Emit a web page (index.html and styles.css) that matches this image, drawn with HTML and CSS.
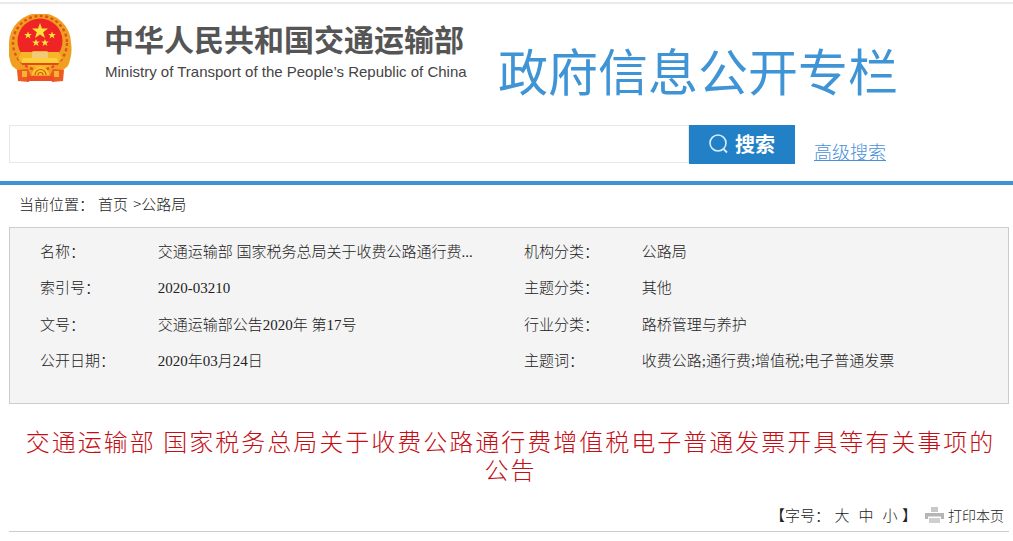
FILE: index.html
```html
<!DOCTYPE html>
<html lang="zh-CN">
<head>
<meta charset="utf-8">
<title>政府信息公开专栏</title>
<link rel="stylesheet" href="styles.css">
</head>
<body>
<div class="top-line"></div>
<header class="masthead">
  <svg class="emblem" width="63" height="69" viewBox="0 0 63 69" aria-hidden="true">
    <path d="M3 52 Q-2 40 0 29 A31 30 0 0 1 62 29 Q64 40 59 52 L47 62 H16Z" fill="#f0a020"/>
    <circle cx="31" cy="29" r="27" fill="none" stroke="#e2511c" stroke-width="2.400" stroke-dasharray="3 2.500"/>
    <circle cx="31" cy="27" r="22.500" fill="#ee2524"/>
    <path d="M12 38h38l3 7q-22 18-44 0z" fill="#f6b62a"/>
    <path d="M23 38h16v6H23z" fill="#f3c878"/>
    <path d="M24 38h14l1-1H23z" fill="#f5b52a"/>
    <path d="M14 44h34l2 5H12z" fill="#fbd038"/>
    <path d="M13 49h36v2H13z" fill="#e8471d"/>
    <path d="M23 61a8.500 8.500 0 0 1 17 0z" fill="#f9c62c"/>
    <path d="M26 61a5.500 5.500 0 0 1 11 0M29 61a2.500 2.500 0 0 1 5 0" fill="none" stroke="#d9531c" stroke-width="1.200"/>
    <path d="M8 56l11-1 3 6-2 7-11-1zM55 56l-11-1-3 6 2 7 11-1z" fill="#ee5a26"/>
    <path d="M18 62h27v5H18z" fill="#ef4c24"/>
    <path d="M13 57h5v6h-5zM45 57h5v6h-5z" fill="#f6b62a"/>
    <polygon fill="#fde23a" points="31,9 33,14.600 39,14.600 34.200,18.200 36,24 31,20.500 26,24 27.800,18.200 23,14.600 29,14.600"/>
    <polygon fill="#fde23a" points="19,17.500 20,20 22.800,20 20.600,21.700 21.400,24.500 19,22.800 16.600,24.500 17.400,21.700 15.200,20 18,20"/>
    <polygon fill="#fde23a" points="43,17.500 44,20 46.800,20 44.600,21.700 45.400,24.500 43,22.800 40.600,24.500 41.400,21.700 39.200,20 42,20"/>
    <polygon fill="#fde23a" points="27,25 28,27.500 30.800,27.500 28.600,29.200 29.400,32 27,30.300 24.600,32 25.400,29.200 23.200,27.500 26,27.500"/>
    <polygon fill="#fde23a" points="36,25 37,27.500 39.800,27.500 37.600,29.200 38.400,32 36,30.300 33.600,32 34.400,29.200 32.200,27.500 35,27.500"/>
  </svg>
  <div class="ministry">
    <div class="ministry-cn">中华人民共和国交通运输部</div>
    <div class="ministry-en">Ministry of Transport of the People’s Republic of China</div>
  </div>
  <div class="column-title">政府信息公开专栏</div>
</header>

<section class="search-row">
  <div class="search-input"></div>
  <div class="search-button">
    <svg width="22" height="22" viewBox="0 0 22 22" aria-hidden="true">
      <circle cx="10" cy="10" r="8" fill="none" stroke="#d8ecf8" stroke-width="1.600"/>
      <path d="M15.500 16l3.500 3.500" stroke="#d8ecf8" stroke-width="1.800" fill="none"/>
    </svg>
    <span>搜索</span>
  </div>
  <a class="advanced" href="#">高级搜索</a>
</section>

<div class="blue-bar"></div>

<nav class="crumbs"><span class="crumb-label">当前位置：</span><span>首页 &gt;公路局</span></nav>

<section class="meta">
  <div class="meta-row">
    <div class="meta-key">名称：</div><div class="meta-val">交通运输部 国家税务总局关于收费公路通行费...</div>
    <div class="meta-key">机构分类：</div><div class="meta-val">公路局</div>
  </div>
  <div class="meta-row">
    <div class="meta-key">索引号：</div><div class="meta-val">2020-03210</div>
    <div class="meta-key">主题分类：</div><div class="meta-val">其他</div>
  </div>
  <div class="meta-row">
    <div class="meta-key">文号：</div><div class="meta-val">交通运输部公告2020年 第17号</div>
    <div class="meta-key">行业分类：</div><div class="meta-val">路桥管理与养护</div>
  </div>
  <div class="meta-row">
    <div class="meta-key">公开日期：</div><div class="meta-val">2020年03月24日</div>
    <div class="meta-key">主题词：</div><div class="meta-val">收费公路;通行费;增值税;电子普通发票</div>
  </div>
</section>

<h1 class="article-title">交通运输部 国家税务总局关于收费公路通行费增值税电子普通发票开具等有关事项的公告</h1>

<div class="tools">
  <span class="font-size">【字号：<span class="size-opt">大</span><span class="size-opt">中</span><span class="size-opt">小</span>】</span>
  <svg class="printer" width="19" height="16" viewBox="0 0 19 16" aria-hidden="true">
    <path d="M6 0h7v5H6z" fill="#c8c8c8"/>
    <path d="M0 6h19v6h-3V9.500H3V12H0z" fill="#b5b5b5"/>
    <path d="M4 11h11v5H4z" fill="#cfcfcf"/>
  </svg>
  <span class="print-label">打印本页</span>
</div>
</body>
</html>
```
FILE: styles.css
```css
* { box-sizing: border-box; }
html, body { margin: 0; padding: 0; background: #fff; }
body {
  width: 1013px;
  height: 541px;
  overflow: hidden;
  font-family: "Liberation Serif", "Noto Sans CJK SC", serif;
  font-size: 15px;
  color: #333;
}
.top-line { height: 4px; border-top: 1px solid #fff; border-bottom: 2px solid #eaeaea; }
.masthead { display: flex; height: 96px; padding: 10px 0 0 9px; }
.emblem { flex: none; }
.ministry { margin-left: 33px; width: 394px; flex: none; }
.ministry-cn {
  font-family: "Noto Sans CJK SC", sans-serif;
  font-size: 30px;
  font-weight: 700;
  line-height: 40px;
  margin: 4px 0 0 -1px;
  color: #555;
}
.ministry-en {
  font-family: "Liberation Sans", sans-serif;
  font-size: 15px;
  line-height: 18px;
  margin-top: 5px;
  color: #444;
}
.column-title {
  font-family: "Noto Sans CJK SC", sans-serif;
  font-size: 50px;
  line-height: 60px;
  margin-top: 25px;
  margin-left: -1px;
  color: #3f94d6;
  white-space: nowrap;
}
.search-row { display: flex; align-items: flex-start; height: 81px; padding: 25px 0 0 9px; }
.search-input { width: 680px; height: 38px; border: 1px solid #e8e8e8; }
.search-button {
  width: 106px;
  height: 39px;
  padding: 0 0 2px 19px;
  background: #2280c6;
  color: #fff;
  display: flex;
  align-items: center;
  justify-content: flex-start;
  gap: 5px;
  font-family: "Noto Sans CJK SC", sans-serif;
  font-size: 20px;
  font-weight: 700;
}
.advanced {
  margin: 12px 0 0 19px;
  font-family: "Noto Sans CJK SC", sans-serif;
  font-size: 18px;
  font-weight: 300;
  line-height: 28px;
  color: #4a90d8;
}
.blue-bar { height: 4px; background: #3c93d5; }
.crumbs {
  display: flex;
  height: 42px;
  padding: 9px 0 0 19px;
  line-height: 20px;
  word-spacing: 2px;
  font-family: "Noto Sans CJK SC", sans-serif;
  font-weight: 300;
  color: #222;
}
.crumb-label { width: 79px; }
.meta {
  margin-left: 9px;
  width: 1000px;
  height: 177px;
  padding: 5px 0 0 30px;
  background: #f4f4f4;
  border: 1px solid #ccc;
}
.meta-row { display: flex; height: 36.4px; align-items: baseline; line-height: 36px; }
.meta-key {
  width: 118px;
  font-family: "Noto Sans CJK SC", sans-serif;
  font-weight: 300;
  color: #222;
}
.meta-val {
  width: 367px;
  font-family: "Liberation Serif", "Noto Sans CJK SC", serif;
  font-weight: 300;
  color: #222;
}
.article-title {
  margin: 23px 17px 0 25px;
  font-family: "Noto Sans CJK SC", sans-serif;
  font-size: 24px;
  font-weight: 300;
  letter-spacing: 2px;
  line-height: 28px;
  text-align: center;
  color: #c40d14;
}
.tools {
  display: flex;
  justify-content: flex-end;
  align-items: center;
  margin: 17px 0 0 9px;
  width: 1000px;
  height: 32px;
  padding: 0 5px 2px 0;
  border-bottom: 1px solid #ccc;
  font-family: "Noto Sans CJK SC", sans-serif;
  font-weight: 300;
  color: #222;
}
.size-opt { margin: 0 4.500px; }
.printer { margin: 0 4px 0 8px; }
.print-label { font-size: 14px; }
```
